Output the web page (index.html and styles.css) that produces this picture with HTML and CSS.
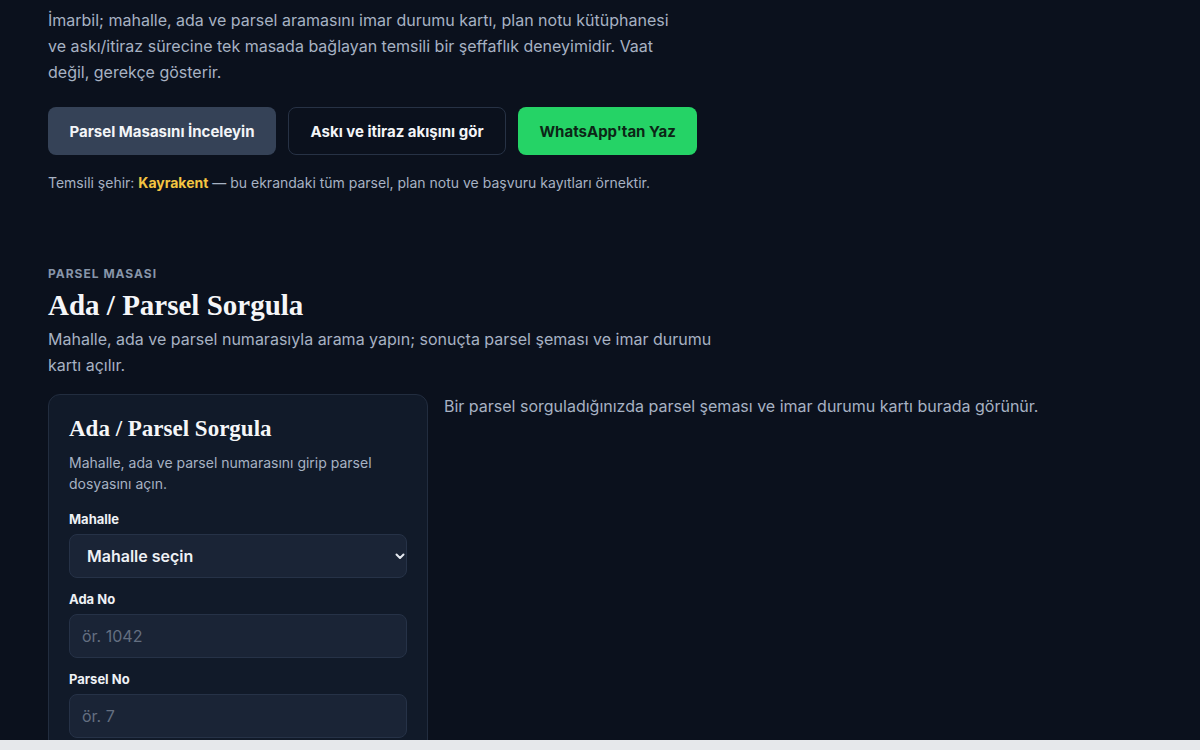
FILE: index.html
```html
<!DOCTYPE html>
<html lang="tr">
<head>
    <meta charset="UTF-8">
    <meta name="viewport" content="width=device-width, initial-scale=1.0">
    <title>İmarbil - Parsel Masası</title>
    <link rel="stylesheet" href="styles.css">
</head>
<body>

<div class="page">
    <section class="hero">
        <p class="lead">İmarbil; mahalle, ada ve parsel aramasını imar durumu kartı, plan notu kütüphanesi ve askı/itiraz sürecine tek masada bağlayan temsili bir şeffaflık deneyimidir. Vaat değil, gerekçe gösterir.</p>
        <div class="actions">
            <a class="btn btn-primary" href="#parsel">Parsel Masasını İnceleyin</a>
            <a class="btn btn-outline" href="#aski">Askı ve itiraz akışını gör</a>
            <a class="btn btn-whatsapp" href="#wa">WhatsApp'tan Yaz</a>
        </div>
        <p class="note">Temsili şehir: <strong>Kayrakent</strong> — bu ekrandaki tüm parsel, plan notu ve başvuru kayıtları örnektir.</p>
    </section>

    <section class="desk" id="parsel">
        <div class="eyebrow">PARSEL MASASI</div>
        <h2>Ada / Parsel Sorgula</h2>
        <p class="desk-intro">Mahalle, ada ve parsel numarasıyla arama yapın; sonuçta parsel şeması ve imar durumu kartı açılır.</p>

        <div class="desk-grid">
            <form class="card">
                <h3>Ada / Parsel Sorgula</h3>
                <p class="card-text">Mahalle, ada ve parsel numarasını girip parsel dosyasını açın.</p>

                <label for="mahalle">Mahalle</label>
                <div class="select-wrap">
                    <select id="mahalle">
                        <option>Mahalle seçin</option>
                        <option>Çamlıtepe</option>
                        <option>Yenidere</option>
                    </select>
                    <svg class="chevron" width="12" height="12" viewBox="0 0 12 12"><path d="M2.5 4.5 6 8l3.5-3.5" fill="none" stroke="#e5e9f0" stroke-width="2" stroke-linecap="round" stroke-linejoin="round"/></svg>
                </div>

                <label for="ada">Ada No</label>
                <input id="ada" type="text" placeholder="ör. 1042">

                <label for="parsel-no">Parsel No</label>
                <input id="parsel-no" type="text" placeholder="ör. 7">
            </form>

            <p class="empty">Bir parsel sorguladığınızda parsel şeması ve imar durumu kartı burada görünür.</p>
        </div>
    </section>
</div>

<div class="bottom-bar"></div>

</body>
</html>
```

FILE: styles.css
```css
body {
    margin: 0;
    background-color: #0b111d;
    color: #a7b2c3;
    font-family: Inter, "Noto Sans", sans-serif;
}
.page {
    padding: 7px 48px 0;
}
.lead {
    margin: 0;
    max-width: 640px;
    font-size: 16px;
    line-height: 26px;
}
.actions {
    display: flex;
    gap: 12px;
    margin-top: 22px;
}
.btn {
    display: flex;
    align-items: center;
    justify-content: center;
    height: 48px;
    padding: 0 21.5px;
    box-sizing: border-box;
    border-radius: 8px;
    font-size: 15px;
    font-weight: 700;
    text-decoration: none;
}
.btn-primary {
    background-color: #354257;
    color: #f3f5f8;
}
.btn-outline {
    border: 1px solid #273245;
    color: #f3f5f8;
}
.btn-whatsapp {
    background-color: #25d366;
    color: #0c2616;
    padding: 0 21.5px;
}
.note {
    margin: 19px 0 0;
    font-size: 14px;
    line-height: 18px;
}
.note strong {
    color: #f4c542;
}
.desk {
    margin-top: 75px;
}
.eyebrow {
    font-size: 12px;
    font-weight: 700;
    letter-spacing: 1px;
    color: #8795a9;
    line-height: 14px;
}
h2 {
    margin: 6px 0 0;
    font-family: "Liberation Serif", "DejaVu Serif", serif;
    font-size: 29px;
    line-height: 36px;
    color: #f5f6f8;
}
.desk-intro {
    margin: 3px 0 0;
    max-width: 680px;
    font-size: 16px;
    line-height: 26px;
}
.desk-grid {
    display: flex;
    align-items: flex-start;
    gap: 16px;
    margin-top: 16px;
}
.card {
    width: 380px;
    box-sizing: border-box;
    padding: 19px 20px 20px;
    background-color: #111a29;
    border: 1px solid #222d3f;
    border-radius: 12px;
}
.card h3 {
    margin: 0;
    font-family: "Liberation Serif", "DejaVu Serif", serif;
    font-size: 23px;
    line-height: 30px;
    color: #f5f6f8;
}
.card-text {
    margin: 8px 0 0;
    font-size: 14px;
    line-height: 21px;
}
.card label {
    display: block;
    margin: 17px 0 7px;
    font-size: 13px;
    font-weight: 700;
    line-height: 16px;
    color: #eef1f5;
}
.card .select-wrap + label,
.card input + label {
    margin-top: 13px;
}
.select-wrap {
    position: relative;
}
.card select,
.card input {
    display: block;
    width: 100%;
    height: 44px;
    box-sizing: border-box;
    background-color: #1a2436;
    border: 1px solid #263247;
    border-radius: 8px;
    font-family: inherit;
    font-size: 16px;
    outline: none;
}
.card select {
    appearance: none;
    padding: 0 17px;
    color: #eef1f5;
    font-weight: 600;
}
.card input {
    padding: 0 12px;
    color: #eef1f5;
}
.card input::placeholder {
    color: #646f81;
}
.chevron {
    position: absolute;
    top: 16px;
    right: 1px;
    pointer-events: none;
}
.empty {
    margin: 0;
    font-size: 16px;
    line-height: 24px;
}
.bottom-bar {
    position: fixed;
    left: 0;
    right: 0;
    bottom: 0;
    height: 10px;
    background-color: #e6e8eb;
}
```
